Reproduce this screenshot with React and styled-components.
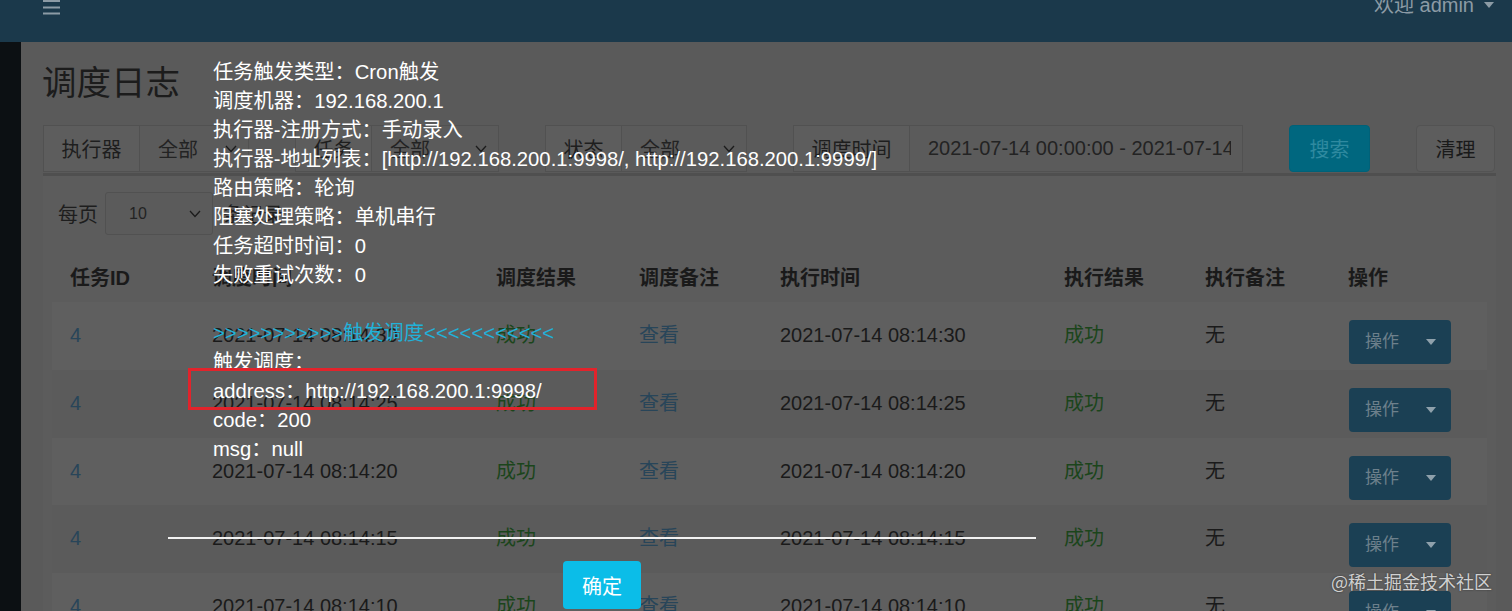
import styled, { createGlobalStyle } from "styled-components";

const GlobalStyle = createGlobalStyle`
  html, body { margin: 0; padding: 0; }
  body {
    background: #5a5a5a;
    font-family: "Liberation Sans", "Noto Sans CJK SC", sans-serif;
    overflow: hidden;
  }
  * { box-sizing: border-box; }
`;

const filters = [
  { label: "执行器", labelW: 97, value: "全部", valueW: 109, select: true },
  { label: "任务", labelW: 77, value: "全部", valueW: 127, select: true },
  { label: "状态", labelW: 77, value: "全部", valueW: 125, select: true },
  { label: "调度时间", labelW: 117, value: "2021-07-14 00:00:00 - 2021-07-14 23:59:59", valueW: 333 },
];

const columns = ["任务ID", "调度时间", "调度结果", "调度备注", "执行时间", "执行结果", "执行备注", "操作"];

const times = ["08:14:30", "08:14:25", "08:14:20", "08:14:15", "08:14:10"];

const logLines = [
  "任务触发类型：Cron触发",
  "调度机器：192.168.200.1",
  "执行器-注册方式：手动录入",
  "执行器-地址列表：[http://192.168.200.1:9998/, http://192.168.200.1:9999/]",
  "路由策略：轮询",
  "阻塞处理策略：单机串行",
  "任务超时时间：0",
  "失败重试次数：0",
  "",
  { accent: ">>>>>>>>>>>触发调度<<<<<<<<<<<" },
  "触发调度：",
  "address：http://192.168.200.1:9998/",
  "code：200",
  "msg：null",
];

const Chevron = () => (
  <svg width="12" height="8" viewBox="0 0 12 8">
    <polyline points="1,1 6,6.5 11,1" fill="none" stroke="#1c1c1c" strokeWidth="1.3" />
  </svg>
);

const Caret = ({ color }) => (
  <svg width="10" height="6" viewBox="0 0 10 6">
    <polygon points="0,0 10,0 5,6" fill={color} />
  </svg>
);

const App = () => {
  return (
    <Page>
      <GlobalStyle />
      <TopBar>
        <svg width="17" height="15" viewBox="0 0 17 15">
          <rect x="0" y="0" width="17" height="2" fill="#8c9ba5" />
          <rect x="0" y="6.5" width="17" height="2" fill="#8c9ba5" />
          <rect x="0" y="12.5" width="17" height="2" fill="#8c9ba5" />
        </svg>
        <UserMenu>
          欢迎 admin
          <Caret color="#8c9ba5" />
        </UserMenu>
      </TopBar>

      <Body>
        <Sidebar />
        <Main>
          <Title>调度日志</Title>

          <FilterRow>
            {filters.map((f) => (
              <InputGroup key={f.label}>
                <Addon $w={f.labelW}>{f.label}</Addon>
                <Field $w={f.valueW}>
                  <FieldText>{f.value}</FieldText>
                  {f.select && <Chevron />}
                </Field>
              </InputGroup>
            ))}
            <Button $primary $w={81}>搜索</Button>
            <Button $w={79}>清理</Button>
          </FilterRow>

          <Box>
            <Toolbar>
              每页
              <PageSelect>
                10
                <Chevron />
              </PageSelect>
              条记录
            </Toolbar>

            <Table>
              <HeadRow>
                {columns.map((c) => (
                  <HeadCell key={c}>{c}</HeadCell>
                ))}
              </HeadRow>
              {times.map((t, i) => (
                <Row key={t} $striped={i % 2 === 0}>
                  <Cell $tone="link">4</Cell>
                  <Cell>2021-07-14 {t}</Cell>
                  <Cell $tone="ok">成功</Cell>
                  <Cell $tone="link">查看</Cell>
                  <Cell>2021-07-14 {t}</Cell>
                  <Cell $tone="ok">成功</Cell>
                  <Cell>无</Cell>
                  <Cell>
                    <OpButton>
                      操作
                      <Caret color="#8fa1ac" />
                    </OpButton>
                  </Cell>
                </Row>
              ))}
            </Table>
          </Box>
        </Main>
      </Body>

      <Dialog>
        <LogText>
          {logLines.map((line, i) =>
            typeof line === "string" ? (
              <LogLine key={i}>{line || "\u00a0"}</LogLine>
            ) : (
              <LogLine key={i} $accent>{line.accent}</LogLine>
            )
          )}
        </LogText>
        <DialogFooter>
          <ConfirmButton>确定</ConfirmButton>
        </DialogFooter>
      </Dialog>

      <Highlight />
      <Watermark>@稀土掘金技术社区</Watermark>
    </Page>
  );
};

const Page = styled.div`
  position: relative;
  width: 1512px;
  height: 611px;
  overflow: hidden;
  display: flex;
  flex-direction: column;
`;

const TopBar = styled.div`
  flex: none;
  height: 42px;
  background: #1b394b;
  display: flex;
  justify-content: space-between;
  align-items: flex-start;
  padding: 0 18px 0 43px;
`;

const UserMenu = styled.div`
  display: flex;
  align-items: center;
  gap: 10px;
  margin-top: -5px;
  font-size: 20px;
  line-height: 20px;
  color: #8c9ba5;
`;

const Body = styled.div`
  flex: 1;
  display: flex;
`;

const Sidebar = styled.div`
  width: 21px;
  flex: none;
  background: #0c1013;
`;

const Main = styled.div`
  flex: 1;
  padding: 21px 16px 0 22px;
`;

const Title = styled.h1`
  margin: 0 0 0 -1px;
  font-size: 34.5px;
  line-height: 40px;
  font-weight: 400;
  color: #1c1c1c;
`;

const FilterRow = styled.div`
  display: flex;
  gap: 46px;
  margin-top: 22px;
  height: 47px;
`;

const InputGroup = styled.div`
  display: flex;
`;

const Addon = styled.div`
  width: ${(p) => p.$w}px;
  display: flex;
  align-items: center;
  justify-content: center;
  background: #5d5d5d;
  border: 1px solid #515151;
  font-size: 20px;
  color: #1e1e1e;
`;

const Field = styled.div`
  width: ${(p) => p.$w}px;
  display: flex;
  align-items: center;
  gap: 8px;
  padding: 0 11px 0 23px;
  background: #5b5b5b;
  border: 1px solid #515151;
  border-left: none;
  font-size: 20px;
  color: #232323;
  overflow: hidden;
`;

const FieldText = styled.span`
  flex: 1;
  white-space: nowrap;
  overflow: hidden;
  margin-left: -5px;
`;

const Button = styled.div`
  width: ${(p) => p.$w}px;
  display: flex;
  align-items: center;
  justify-content: center;
  border-radius: 4px;
  font-size: 20px;
  background: ${(p) => (p.$primary ? "#00677f" : "#5d5d5d")};
  border: 1px solid ${(p) => (p.$primary ? "#006178" : "#535353")};
  color: ${(p) => (p.$primary ? "#2f8aa0" : "#1a1a1a")};
`;

const Box = styled.div`
  margin-top: 1px;
  border-top: 3px solid #4f4f4f;
  background: #5c5c5c;
  padding: 16px 9px 0;
  height: 500px;
`;

const Toolbar = styled.div`
  display: flex;
  align-items: center;
  height: 43px;
  padding-left: 6px;
  font-size: 20px;
  color: #1e1e1e;
  gap: 7px;
`;

const PageSelect = styled.div`
  width: 108px;
  height: 43px;
  display: flex;
  align-items: center;
  justify-content: space-between;
  padding: 0 11px 0 23px;
  border: 1px solid #515151;
  border-radius: 3px;
  background: #5b5b5b;
  font-size: 16px;
  color: #232323;
  margin-right: 3px;
`;

const gridCols = "142px 284px 143px 141px 284px 141px 143px 1fr";

const Table = styled.div`
  margin-top: 15px;
`;

const HeadRow = styled.div`
  display: grid;
  grid-template-columns: ${gridCols};
  height: 52px;
`;

const HeadCell = styled.div`
  padding: 14px 0 0 18px;
  font-size: 20px;
  line-height: 28px;
  font-weight: 700;
  color: #1a1a1a;
`;

const Row = styled.div`
  display: grid;
  grid-template-columns: ${gridCols};
  height: 67.75px;
  background: ${(p) => (p.$striped ? "#5f5f5f" : "#5b5b5b")};
`;

const toneColor = { link: "#284559", ok: "#1b451b" };

const Cell = styled.div`
  padding: 19px 0 0 18px;
  font-size: 20px;
  line-height: 28px;
  color: ${(p) => toneColor[p.$tone] || "#1a1a1a"};
  white-space: nowrap;
`;

const OpButton = styled.div`
  margin: -1px 0 0 1px;
  width: 102px;
  height: 44px;
  display: flex;
  align-items: center;
  justify-content: space-between;
  padding: 0 15px 0 16px;
  border-radius: 4px;
  background: #1b4054;
  font-size: 17px;
  color: #6d808c;
`;

const Dialog = styled.div`
  position: absolute;
  left: 168px;
  top: 58px;
  width: 868px;
`;

const LogText = styled.div`
  padding: 0 45px;
`;

const LogLine = styled.div`
  font-size: 20.25px;
  line-height: 29px;
  white-space: nowrap;
  color: ${(p) => (p.$accent ? "#22b1d8" : "#ffffff")};
`;

const DialogFooter = styled.div`
  margin-top: 73px;
  border-top: 2px solid #f2f2f2;
  display: flex;
  justify-content: center;
  padding-top: 22px;
`;

const ConfirmButton = styled.div`
  width: 78px;
  height: 48px;
  display: flex;
  align-items: center;
  justify-content: center;
  border-radius: 4px;
  background: #0bbde8;
  color: #ffffff;
  font-size: 20px;
`;

const Highlight = styled.div`
  position: absolute;
  left: 188px;
  top: 368px;
  width: 409px;
  height: 42px;
  border: 3px solid #e2232b;
`;

const Watermark = styled.div`
  position: absolute;
  right: 20px;
  bottom: 19px;
  font-family: "Noto Sans CJK SC", sans-serif;
  font-size: 18px;
  line-height: 22px;
  color: #d0d0d0;
  text-shadow: 0 0 2px rgba(0, 0, 0, 0.5);
`;

export default App;
